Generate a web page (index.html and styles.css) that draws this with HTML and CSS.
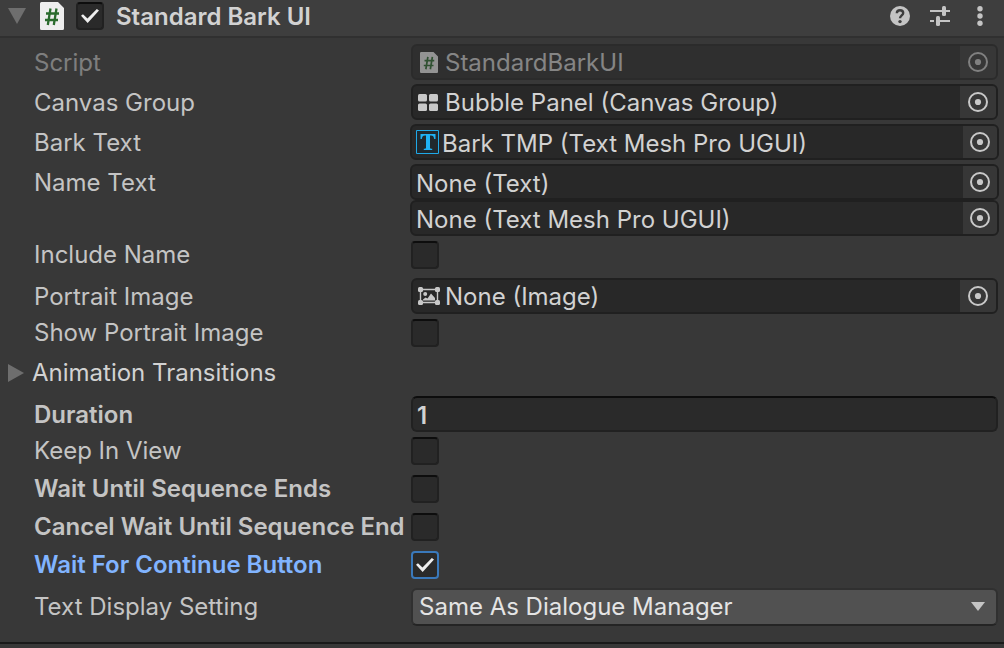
FILE: index.html
```html
<!DOCTYPE html>
<html lang="en">
<head>
<meta charset="utf-8">
<title>Standard Bark UI</title>
<link rel="stylesheet" href="styles.css">
</head>
<body>
<svg class="defs" aria-hidden="true">
  <symbol id="picker" viewBox="0 0 20 20"><circle cx="10" cy="10" r="9" fill="none" stroke="currentColor" stroke-width="2"/><circle cx="10" cy="10" r="3.1" fill="currentColor"/></symbol>
  <symbol id="script" viewBox="0 0 24 28"><path d="M1.5 0H18l6 6v20.500a1.500 1.500 0 0 1-1.500 1.500h-21A1.500 1.500 0 0 1 0 26.500v-25A1.500 1.500 0 0 1 1.500 0z" fill="currentColor"/><path d="M10.500 6.500L7.800 23M16.500 6.500L13.800 23M6 11.500h13M5 18h13" fill="none" stroke="#2a6b2d" stroke-width="2.300"/></symbol>
</svg>
<main class="inspector">
  <header class="header">
    <button class="fold" aria-label="Collapse component"><svg width="18" height="16" viewBox="0 0 18 16"><path d="M0 0h18L9 16z" fill="#6e6e6e"/></svg></button>
    <svg class="script-icon" width="24" height="28"><use href="#script"/></svg>
    <input class="check" type="checkbox" id="enabled" checked>
    <label class="title" for="enabled">Standard Bark UI</label>
    <div class="tools">
      <button aria-label="Help"><svg width="20" height="20" viewBox="0 0 20 20"><circle cx="10" cy="10" r="10" fill="#c4c4c4"/><path d="M6.800 7.200C6.900 5.200 8.200 4.200 10 4.200s3.200 1 3.200 2.800c0 2.300-3.200 2.500-3.200 5.300" fill="none" stroke="#3e3e3e" stroke-width="2.400"/><circle cx="10" cy="15.600" r="1.700" fill="#3e3e3e"/></svg></button>
      <button aria-label="Presets"><svg width="20" height="20" viewBox="0 0 20 20"><path d="M0 5h12M16 5h4M0 15h4M10 15h10" stroke="#c4c4c4" stroke-width="2"/><rect x="12" y="0" width="4" height="10" rx="1.500" fill="#c4c4c4"/><rect x="6" y="10" width="4" height="10" rx="1.500" fill="#c4c4c4"/></svg></button>
      <button aria-label="More options"><svg width="20" height="20" viewBox="0 0 20 20"><g fill="#c4c4c4"><circle cx="10" cy="2.700" r="2.700"/><circle cx="10" cy="10" r="2.700"/><circle cx="10" cy="17.300" r="2.700"/></g></svg></button>
    </div>
  </header>

  <div class="props">
    <div class="row disabled">
      <span class="label">Script</span>
      <div class="object"><svg class="icon small" width="18" height="21"><use href="#script"/></svg><span class="value">StandardBarkUI</span><button class="pick" disabled aria-label="Select script"><svg width="20" height="20"><use href="#picker"/></svg></button></div>
    </div>
    <div class="row">
      <span class="label">Canvas Group</span>
      <div class="object"><svg class="icon" width="20" height="17" viewBox="0 0 20 17"><g fill="#c8c8c8"><rect width="9" height="7.500" rx="1.500"/><rect x="11" width="9" height="7.500" rx="1.500"/><rect y="9.500" width="9" height="7.500" rx="1.500"/><rect x="11" y="9.500" width="9" height="7.500" rx="1.500"/></g></svg><span class="value">Bubble Panel (Canvas Group)</span><button class="pick" aria-label="Select canvas group"><svg width="20" height="20"><use href="#picker"/></svg></button></div>
    </div>
    <div class="row">
      <span class="label">Bark Text</span>
      <div class="object wide"><svg class="tmp" width="24" height="24" viewBox="0 0 24 24"><path d="M.5.5h22v23H.5z" fill="#20292e" stroke="#1fa9e8"/><path d="M4.500 4h15v5h-1.300c-.3-2.300-1.200-3.400-3.200-3.400h-1v11.800c0 1 .5 1.300 2.200 1.300V20H7.800v-1.300c1.700 0 2.200-.3 2.200-1.300V5.600H9c-2 0-2.900 1.100-3.200 3.400H4.500z" fill="#1fb2f5"/></svg><span class="value">Bark TMP (Text Mesh Pro UGUI)</span><button class="pick" aria-label="Select bark text"><svg width="20" height="20"><use href="#picker"/></svg></button></div>
    </div>
    <div class="row double">
      <span class="label">Name Text</span>
      <div class="stack">
        <div class="object wide"><span class="value">None (Text)</span><button class="pick" aria-label="Select name text"><svg width="20" height="20"><use href="#picker"/></svg></button></div>
        <div class="object wide"><span class="value">None (Text Mesh Pro UGUI)</span><button class="pick" aria-label="Select name text mesh"><svg width="20" height="20"><use href="#picker"/></svg></button></div>
      </div>
    </div>
    <div class="row toggle"><label class="label" for="include">Include Name</label><input class="check" type="checkbox" id="include"></div>
    <div class="row portrait">
      <span class="label">Portrait Image</span>
      <div class="object"><svg class="icon image" width="22" height="18" viewBox="0 0 22 18"><g fill="#c8c8c8"><path d="M2.500 2.500h17v13h-17z" fill="none" stroke="#c8c8c8" stroke-width="1.400"/><rect width="5" height="5" rx="1.500"/><rect x="17" width="5" height="5" rx="1.500"/><rect y="13" width="5" height="5" rx="1.500"/><rect x="17" y="13" width="5" height="5" rx="1.500"/><circle cx="7.200" cy="7" r="2"/><path d="M5 13.500v-1l2.500-2 2 1L13 6.500l4 4.500v2.500z"/></g></svg><span class="value">None (Image)</span><button class="pick" aria-label="Select portrait image"><svg width="20" height="20"><use href="#picker"/></svg></button></div>
    </div>
    <div class="row compact"><label class="label" for="show">Show Portrait Image</label><input class="check" type="checkbox" id="show"></div>
    <button class="foldout"><svg width="16" height="18" viewBox="0 0 16 18"><path d="M0 0l16 9L0 18z" fill="#6e6e6e"/></svg>Animation Transitions</button>
    <div class="row duration bold"><label class="label" for="duration">Duration</label><input class="text" type="text" id="duration" value="1"></div>
    <div class="row toggle"><label class="label" for="keep">Keep In View</label><input class="check" type="checkbox" id="keep"></div>
    <div class="row toggle bold"><label class="label" for="wait">Wait Until Sequence Ends</label><input class="check" type="checkbox" id="wait"></div>
    <div class="row toggle bold"><label class="label" for="cancel">Cancel Wait Until Sequence End</label><input class="check" type="checkbox" id="cancel"></div>
    <div class="row toggle bold active"><label class="label" for="continue">Wait For Continue Button</label><input class="check" type="checkbox" id="continue" checked></div>
    <div class="row setting">
      <label class="label" for="display">Text Display Setting</label>
      <div class="dropdown"><select id="display"><option>Same As Dialogue Manager</option></select><svg class="caret" width="14" height="9" viewBox="0 0 14 9"><path d="M0 0h14L7 9z" fill="#c4c4c4"/></svg></div>
    </div>
  </div>
</main>
</body>
</html>
```
FILE: styles.css
```css
* { box-sizing: border-box; }
body {
  margin: 0;
  background: #383838;
  color: #c4c4c4;
  font: 400 24px/32px Inter, "Liberation Sans", sans-serif;
}
button, input, select { font: inherit; color: inherit; margin: 0; }
button { background: none; border: 0; padding: 0; }
svg { display: block; flex: none; }
.defs { position: absolute; width: 0; height: 0; }

.inspector { border-bottom: 2px solid #1a1a1a; padding-bottom: 12px; }
.header {
  display: flex;
  align-items: center;
  height: 38px;
  padding: 0 14px 4px 8px;
  background: #3e3e3e;
  border-bottom: 2px solid #303030;
}
.fold { margin-right: 14px; }
.script-icon { color: #eee; margin-right: 12px; }
.title { margin-left: 12px; padding-top: 2px; font-weight: 600; color: #d2d2d2; }
.tools { display: flex; gap: 20px; margin-left: auto; }

.props { padding: 4px 6px 0 34px; }
.row {
  display: grid;
  grid-template-columns: 377px minmax(0, 1fr);
  align-items: center;
  min-height: 40px;
}
.label { white-space: nowrap; padding-top: 2px; }
.bold { font-weight: 600; }
.active .label { color: #81b4ff; }
.toggle { min-height: 38px; }
.compact { min-height: 30px; }
.toggle .label, .compact .label, .setting .label { padding-top: 0; }
.compact .label { line-height: 28px; }
.portrait { min-height: 44px; }
.duration { min-height: 36px; }
.setting { min-height: 46px; }
.double { min-height: 74px; padding-top: 2px; align-items: start; }
.double .label { line-height: 34px; }

.object {
  display: flex;
  align-items: center;
  height: 36px;
  padding-left: 5px;
  background: #282828;
  border: 2px solid #202020;
  border-radius: 6px;
  color: #d2d2d2;
  overflow: hidden;
}
.wide { margin: 0 -1px; padding-left: 4px; }
.value { flex: 1; min-width: 0; padding-top: 2px; white-space: nowrap; overflow: hidden; }
.wide .value { padding-top: 4px; }
.icon { margin-right: 7px; }
.image { margin-right: 5px; }
.small { margin: 0 7px 0 2px; color: #eee; }
.tmp { margin-right: 2px; }
.pick {
  display: flex;
  align-items: center;
  justify-content: center;
  align-self: stretch;
  width: 36px;
  background: #373737;
  color: #c8c8c8;
}
.wide .pick { width: 34px; }
.disabled > * { opacity: 0.5; }

.check {
  appearance: none;
  display: grid;
  place-items: center;
  width: 28px;
  height: 28px;
  background: #2a2a2a;
  border: 2px solid #212121;
  border-top-color: #0d0d0d;
  border-radius: 4px;
}
.check:checked::before {
  content: "";
  width: 18px;
  height: 14px;
  background: #eee;
  clip-path: polygon(0 49%, 11% 38%, 36% 68%, 88% 0, 100% 10%, 37% 100%);
}
.active .check { border-color: #3a79bb; }

.foldout {
  display: flex;
  align-items: center;
  gap: 8px;
  height: 48px;
  padding-top: 2px;
  margin-left: -26px;
  color: #d2d2d2;
}
.text {
  width: 100%;
  height: 36px;
  padding: 2px 4px 0;
  background: #2a2a2a;
  border: 2px solid #212121;
  border-top-color: #0d0d0d;
  border-radius: 6px;
  color: #d2d2d2;
}
.dropdown { position: relative; }
.dropdown select {
  display: block;
  appearance: none;
  width: 100%;
  height: 38px;
  padding: 0 36px 0 6px;
  background: #515151;
  border: 2px solid #303030;
  border-bottom-color: #242424;
  border-radius: 6px;
  color: #e4e4e4;
}
.caret { position: absolute; right: 13px; top: 14px; pointer-events: none; }
```
